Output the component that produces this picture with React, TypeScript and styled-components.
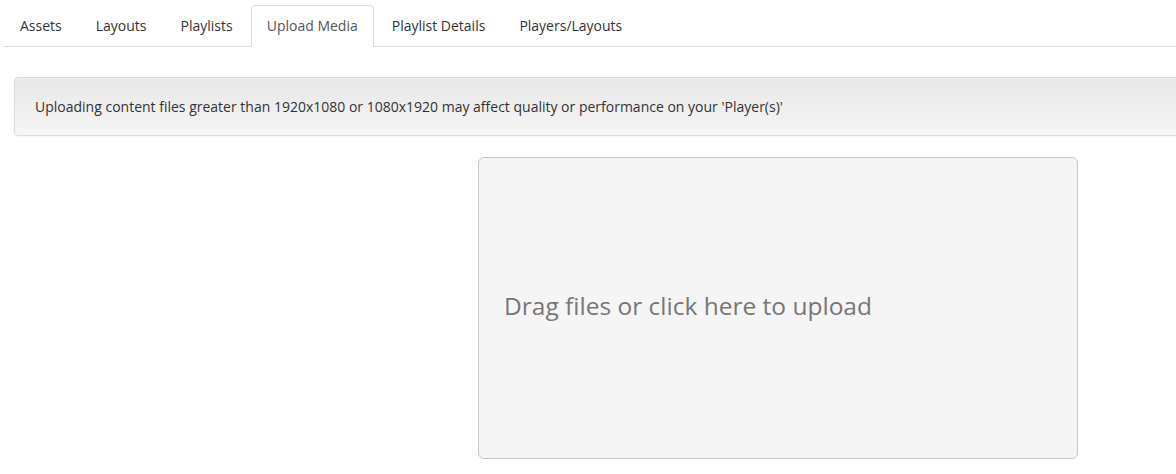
import styled, { createGlobalStyle } from 'styled-components';

const GlobalStyle = createGlobalStyle`
  html, body {
    margin: 0;
    padding: 0;
    background: #fff;
    overflow: hidden;
  }
  body {
    font-family: "Open Sans", "Liberation Sans", Arial, sans-serif;
    font-size: 14px;
    color: #333;
  }
`;

const Page = styled.div`
  width: 1176px;
  height: 474px;
  padding-top: 5px;
  box-sizing: border-box;
  overflow: hidden;
`;

const TabBar = styled.ul`
  display: flex;
  list-style: none;
  margin: 0 0 0 4px;
  padding: 0;
  border-bottom: 1px solid #ddd;
`;

const Tab = styled.li<{ $active?: boolean }>`
  margin-right: 2px;
  margin-bottom: -1px;
  padding: 10px 15px;
  line-height: 20px;
  font-size: 14px;
  color: ${(p) => (p.$active ? '#555' : '#333')};
  background: ${(p) => (p.$active ? '#fff' : 'transparent')};
  border: 1px solid ${(p) => (p.$active ? '#ddd' : 'transparent')};
  border-bottom-color: ${(p) => (p.$active ? '#fff' : 'transparent')};
  border-radius: 4px 4px 0 0;
  cursor: pointer;
`;

const Content = styled.div`
  padding: 30px 0 0 14px;
`;

const Alert = styled.div`
  width: 1200px;
  box-sizing: border-box;
  padding: 19px 20px 18px;
  line-height: 20px;
  font-size: 14px;
  color: #333;
  background: linear-gradient(to bottom, #e8e8e8 0%, #f5f5f5 100%);
  border: 1px solid #dcdcdc;
  border-radius: 4px;
  box-shadow: inset 0 1px 0 rgba(255, 255, 255, 0.25), 0 1px 2px rgba(0, 0, 0, 0.05);
`;

const UploadRow = styled.div`
  display: grid;
  grid-template-columns: 464px 600px;
  margin-top: 21px;
`;

const DropZone = styled.div`
  grid-column: 2;
  height: 302px;
  box-sizing: border-box;
  display: flex;
  align-items: center;
  padding: 0 25px 6px;
  background: #f5f5f5;
  border: 1px solid #c8c8c8;
  border-radius: 6px;
  font-size: 24.5px;
  color: #777;
  cursor: pointer;
`;

const tabs = ['Assets', 'Layouts', 'Playlists', 'Upload Media', 'Playlist Details', 'Players/Layouts'];

export default function App() {
  return (
    <Page>
      <GlobalStyle />
      <TabBar>
        {tabs.map((t) => (
          <Tab key={t} $active={t === 'Upload Media'}>
            {t}
          </Tab>
        ))}
      </TabBar>
      <Content>
        <Alert>
          Uploading content files greater than 1920x1080 or 1080x1920 may affect quality or performance on your 'Player(s)'
        </Alert>
        <UploadRow>
          <DropZone>Drag files or click here to upload</DropZone>
        </UploadRow>
      </Content>
    </Page>
  );
}
